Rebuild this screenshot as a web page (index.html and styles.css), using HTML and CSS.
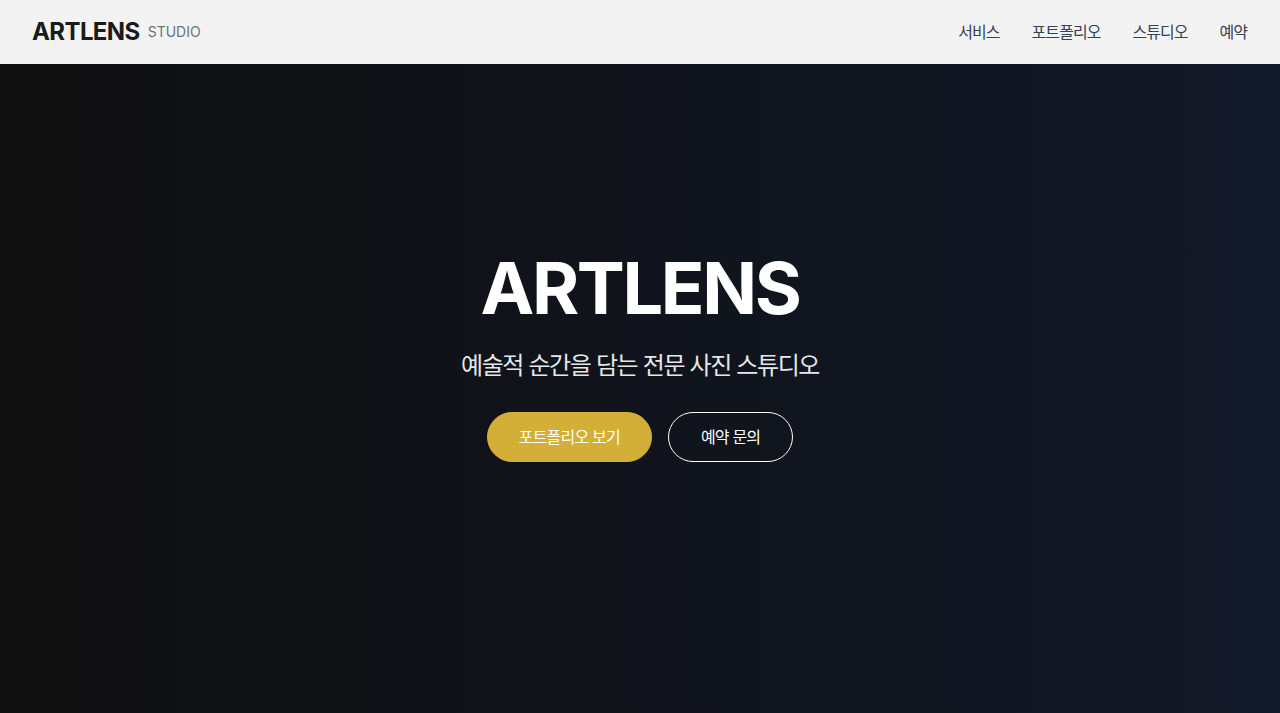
FILE: index.html
```html
<!DOCTYPE html>
<html lang="ko">
<head>
<meta charset="utf-8">
<title>ARTLENS STUDIO</title>
<link rel="stylesheet" href="styles.css">
</head>
<body>
<header class="site-header">
  <div class="brand">
    <span class="brand-name">ARTLENS</span>
    <span class="brand-sub">STUDIO</span>
  </div>
  <nav class="nav">
    <a href="#" class="nav-link">서비스</a>
    <a href="#" class="nav-link">포트폴리오</a>
    <a href="#" class="nav-link">스튜디오</a>
    <a href="#" class="nav-link">예약</a>
  </nav>
</header>
<main class="hero">
  <div class="hero-inner">
    <h1 class="hero-title">ARTLENS</h1>
    <p class="hero-sub">예술적 순간을 담는 전문 사진 스튜디오</p>
    <div class="hero-actions">
      <a href="#" class="btn btn-primary">포트폴리오 보기</a>
      <a href="#" class="btn btn-outline">예약 문의</a>
    </div>
  </div>
</main>
</body>
</html>
```
FILE: styles.css
```css
* { box-sizing: border-box; margin: 0; padding: 0; }
html, body { height: 100%; }
body {
  font-family: Inter, "Noto Sans CJK KR", sans-serif;
  background: #111;
  color: #fff;
}
.site-header {
  position: fixed;
  top: 0; left: 0; right: 0;
  height: 64px;
  background: #f3f3f3;
  display: flex;
  align-items: center;
  justify-content: space-between;
  padding: 0 32px;
  z-index: 10;
}
.brand { display: flex; align-items: center; gap: 8px; }
.brand-name { font-size: 24px; line-height: 32px; font-weight: 700; color: #1a1a1a; letter-spacing: -0.025em; }
.brand-sub { font-size: 14px; line-height: 20px; color: #6b7280; }
.nav { display: flex; gap: 32px; margin-right: 1px; }
.nav-link { font-size: 16px; line-height: 24px; color: #374151; text-decoration: none; letter-spacing: -0.06em; }
.hero {
  min-height: 100vh;
  background: linear-gradient(to right, #0f0f0f, #111827);
  display: flex;
  align-items: center;
  justify-content: center;
  text-align: center;
}
.hero-title { font-size: 72px; line-height: 1; font-weight: 700; letter-spacing: -0.033em; margin-bottom: 24px; }
.hero-sub { font-family: "Noto Sans CJK KR", sans-serif; font-size: 24px; line-height: 32px; color: #e5e7eb; letter-spacing: -0.057em; margin-bottom: 32px; }
.hero-actions { display: flex; justify-content: center; gap: 16px; }
.btn {
  display: inline-block;
  padding: 12px 31px;
  border-radius: 9999px;
  border: 1px solid transparent;
  font-size: 16px;
  line-height: 24px;
  color: #fff;
  text-decoration: none;
  letter-spacing: -0.05em;
}
.btn-primary { background: #d4af37; border-color: #d4af37; }
.btn-outline { border-color: #fff; padding: 12px 32px; }
```
